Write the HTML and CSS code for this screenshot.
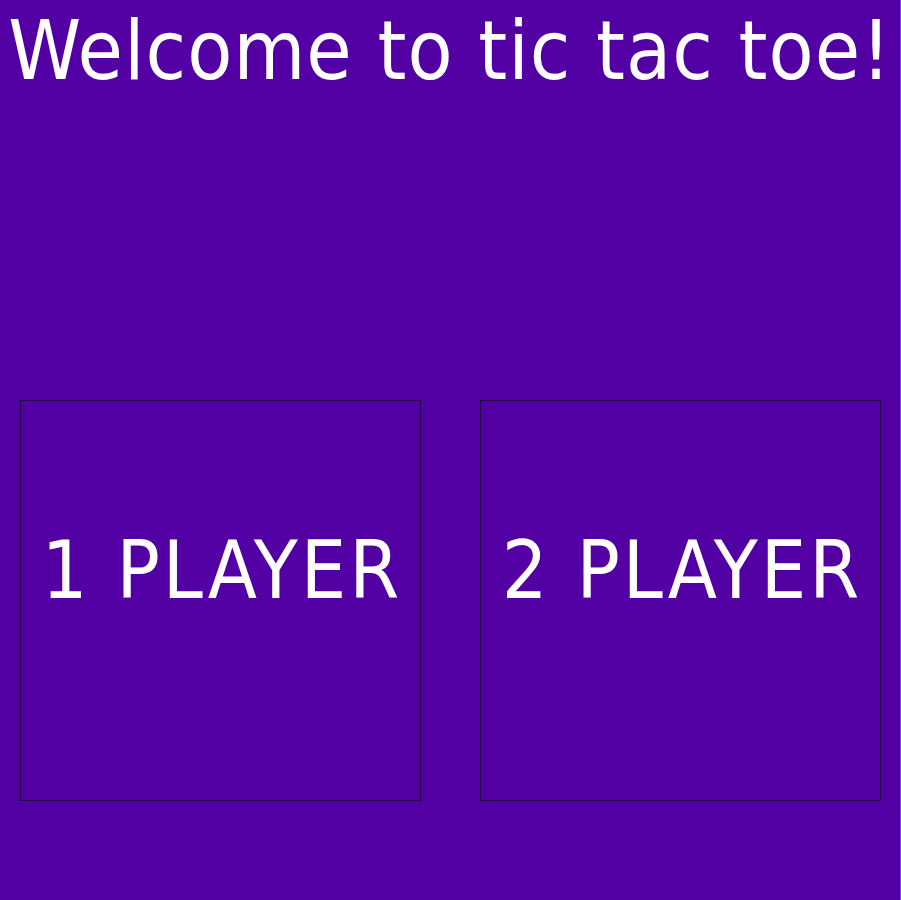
FILE: index.html
```html
<!DOCTYPE html>
<html lang="en">
<head>
<meta charset="utf-8">
<title>Tic Tac Toe</title>
<link rel="stylesheet" href="styles.css">
</head>
<body>
<h1 class="title">Welcome to tic tac toe!</h1>
<div class="modes">
  <button class="mode">1 PLAYER</button>
  <button class="mode">2 PLAYER</button>
</div>
</body>
</html>
```
FILE: styles.css
```css
html {
  background: #8a45e6;
}
body {
  margin: 0;
  width: 900px;
  height: 900px;
  background: #5200a3;
  color: #ffffff;
  font-family: "DejaVu Sans Condensed", "DejaVu Sans", sans-serif;
  font-stretch: condensed;
}
.title {
  margin: 0;
  padding-top: 3px;
  font-size: 82px;
  font-weight: normal;
  letter-spacing: 1.1px;
  text-align: center;
  white-space: nowrap;
}
.modes {
  display: flex;
  gap: 59px;
  padding-left: 20px;
  margin-top: 302px;
}
.mode {
  box-sizing: border-box;
  width: 401px;
  height: 401px;
  border: 1px solid #1e0040;
  background: transparent;
  color: #ffffff;
  font-family: inherit;
  font-stretch: condensed;
  font-size: 80px;
  letter-spacing: 3px;
  padding: 123px 0 0 3px;
  display: flex;
  justify-content: center;
  align-items: flex-start;
  white-space: nowrap;
}
```
